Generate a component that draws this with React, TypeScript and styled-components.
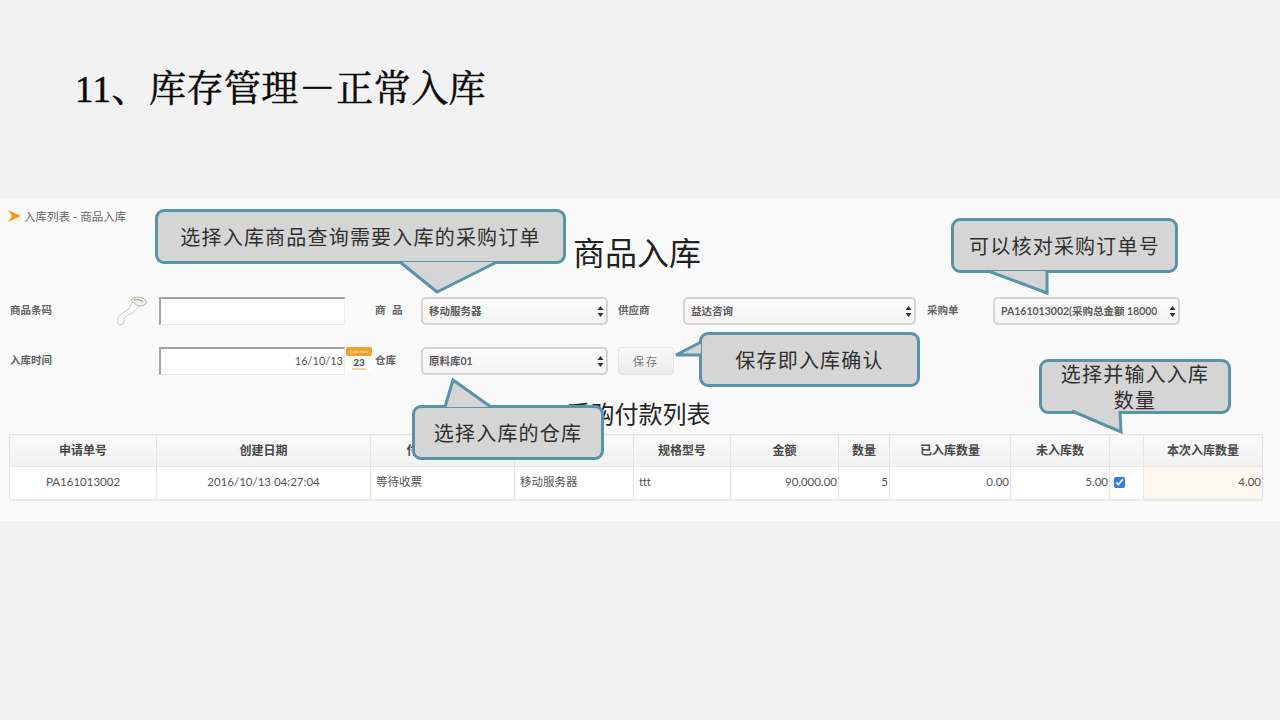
import React from 'react';
import styled, { createGlobalStyle } from 'styled-components';

const CJK = '"Noto Sans CJK SC", sans-serif';
const UI = `Lato, ${CJK}`;

const GlobalStyle = createGlobalStyle`
  html, body {
    margin: 0;
    padding: 0;
    background: #f2f2f2;
  }
`;

const Slide = styled.div`
  width: 1280px;
  height: 720px;
  overflow: hidden;
  background: #f2f2f2;
`;

const SlideHeader = styled.header`
  height: 198px;
  padding: 67px 0 0 75px;
  box-sizing: border-box;
`;

const SlideTitle = styled.h1`
  margin: 0;
  font-family: "Liberation Serif", "Noto Serif CJK SC", ${CJK};
  font-size: 37px;
  line-height: 46px;
  font-weight: 400;
  letter-spacing: 0.45px;
  -webkit-text-stroke: 0.5px #0a0a0a;
  color: #0a0a0a;
`;

const Panel = styled.section`
  position: relative;
  height: 323px;
  box-sizing: border-box;
  padding: 10px 0 0 9px;
  background: #fafafa;
  font-family: ${UI};
`;

const Breadcrumb = styled.div`
  display: flex;
  align-items: center;
  gap: 2px;
  height: 16px;
  margin-left: -1px;
  font-size: 11.5px;
  color: #666;
`;

const PageHeading = styled.h2`
  margin: 7px 0 22px;
  height: 44px;
  padding-right: 15px;
  text-align: center;
  font-size: 32px;
  line-height: 44px;
  font-weight: 400;
  color: #222;
`;

const FormGrid = styled.div`
  display: grid;
  padding-left: 1px;
  grid-template-columns: 105px 44px 186px 30px 46px 187px 10px 65px 233px 11px 66px 187px;
  grid-auto-rows: 28px;
  row-gap: 22px;
`;

const FieldLabel = styled.label<{ $col: number; $spaced?: boolean }>`
  grid-column: ${p => p.$col};
  align-self: center;
  margin-top: -4px;
  font-size: 10.5px;
  font-weight: 700;
  color: #636363;
  letter-spacing: ${p => (p.$spaced ? '2px' : '0')};
`;

const Cell = styled.div<{ $col: number }>`
  grid-column: ${p => p.$col};
  display: flex;
  align-items: center;
`;

const TextBox = styled.div<{ $col: number }>`
  grid-column: ${p => p.$col};
  box-sizing: border-box;
  display: flex;
  align-items: center;
  justify-content: flex-end;
  padding: 0 1px 2px 0;
  background: #fff;
  border-top: 2px solid #a3a3a3;
  border-left: 2px solid #a3a3a3;
  border-right: 1px solid #eee;
  border-bottom: 1px solid #e8e8e8;
  font-size: 11px;
  color: #555;
`;

const SelectBox = styled.div<{ $col: number }>`
  grid-column: ${p => p.$col};
  box-sizing: border-box;
  display: flex;
  align-items: center;
  justify-content: space-between;
  padding: 0 2px 2px 6px;
  background: linear-gradient(#fcfcfc, #f4f4f4);
  border: 2px solid #d4d4d4;
  border-radius: 5px;
  font-size: 10.5px;
  font-weight: 700;
  color: #5c5c5c;
  white-space: nowrap;
  overflow: hidden;
`;

const SelectText = styled.span`
  overflow: hidden;
`;

const SaveButton = styled.button<{ $col: number }>`
  grid-column: ${p => p.$col};
  width: 56px;
  padding: 0;
  background: linear-gradient(#fafafa, #ececec);
  border: 1px solid #e6e6e6;
  border-radius: 3px;
  font-family: ${UI};
  font-size: 11px;
  letter-spacing: 2px;
  color: #777;
`;

const CalendarIcon = styled.div`
  width: 26px;
  height: 26px;
  margin: -2px 0 0 1px;
  display: flex;
  flex-direction: column;
  align-items: center;
  background: #fdfdfd;
`;

const CalendarTop = styled.div`
  align-self: stretch;
  height: 9px;
  background: #f0a030;
  border-radius: 2px;
  font-size: 4px;
  line-height: 9px;
  text-align: center;
  color: #fde9c4;
`;

const CalendarDay = styled.div`
  font-size: 10px;
  line-height: 12px;
  font-weight: 900;
  color: #555;
`;

const CalendarFoot = styled.div`
  width: 14px;
  height: 2px;
  background: #f6d49a;
`;

const SectionHeading = styled.h3`
  margin: 22px 0 3px;
  height: 34px;
  padding-right: 12px;
  text-align: center;
  font-size: 24px;
  line-height: 34px;
  font-weight: 400;
  color: #222;
`;

const Table = styled.table`
  width: 1253px;
  table-layout: fixed;
  border-collapse: collapse;
  font-size: 10.5px;
  color: #555;
  box-shadow: 0 1px 1px #ececec;
`;

const HeadCell = styled.th`
  height: 29px;
  padding: 0 0 2px;
  border: 1px solid #e6e6e6;
  background: linear-gradient(#fafafa, #f1f1f1);
  font-size: 12px;
  font-weight: 700;
  color: #484848;
  text-align: center;
`;

const BodyCell = styled.td<{ $align: string; $tint?: boolean }>`
  height: 28px;
  padding: 0 ${p => (p.$align === 'right' ? '1px' : '0')} 4px ${p => (p.$align === 'left' ? '5px' : '0')};
  border: 1px solid #e6e6e6;
  background: ${p => (p.$tint ? '#fdf8ef' : '#fff')};
  text-align: ${p => p.$align};
  font-size: 11.5px;
  white-space: nowrap;
`;

const RowCheck = styled.input`
  display: block;
  width: 11px;
  height: 11px;
  margin: 2px 0 0 -1px;
  accent-color: #2f80e6;
`;

const Callout = styled.div<{ $x: number; $y: number; $w: number; $h: number }>`
  position: absolute;
  left: ${p => p.$x}px;
  top: ${p => p.$y}px;
  width: ${p => p.$w}px;
  height: ${p => p.$h}px;
  box-sizing: border-box;
  padding: 0 14px;
  display: flex;
  align-items: center;
  justify-content: center;
  text-align: center;
  background: #d5d5d5;
  border: 3px solid #5893aa;
  border-radius: 9px;
  font-family: ${CJK};
  font-size: 20px;
  line-height: 26px;
  letter-spacing: 1.2px;
  color: #303030;
`;

const CalloutTail = styled.svg`
  position: absolute;
  left: -3px;
  top: -3px;
  overflow: visible;
  pointer-events: none;
`;

const CalloutText = styled.span`
  position: relative;
`;

// tail points are relative to the callout's outer box: base, tip, base
const Tail: React.FC<{ points: number[][] }> = ({ points }) => {
  const line = points.map(pt => pt.join(',')).join(' ');
  return (
    <CalloutTail width="1" height="1">
      <polygon points={line} fill="#d5d5d5" />
      <polyline points={line} fill="none" stroke="#5893aa" strokeWidth="3" strokeLinejoin="miter" />
    </CalloutTail>
  );
};

const ArrowMark = () => (
  <svg width="14" height="12" viewBox="0 0 14 12">
    <path d="M0 0 L13 6 L0 12 L4 6 Z" fill="#f39a1e" />
  </svg>
);

const ScannerIcon = () => (
  <svg width="34" height="30" viewBox="0 0 34 30" fill="none" stroke="#c9cdc9" strokeWidth="1">
    <path d="M16 4 C20 0 28 0 31 5 C32 8 29 10 25 10 C22 10 20 8 16 4 Z" fill="#eef2ea" stroke="#a9b3a5" />
    <path d="M19 4 C22 3 26 4 28 6" stroke="#8f9a8c" />
    <path d="M17 6 L14 13 L5 19 C2 22 2 27 4 29" />
    <path d="M24 11 L17 17 L10 21 L8 28" />
    <path d="M4 29 L8 28" />
  </svg>
);

const SelectArrows = () => (
  <svg width="7" height="11" viewBox="0 0 7 11" style={{ flex: 'none', marginTop: 2 }}>
    <path d="M3.5 0 L6.5 4 L0.5 4 Z M3.5 11 L0.5 7 L6.5 7 Z" fill="#333" />
  </svg>
);

const columnWidths = [147, 214, 144, 119, 97, 108, 51, 121, 99, 34, 119];

const headers = ['申请单号', '创建日期', '付款单据状态', '商品名称', '规格型号', '金额', '数量', '已入库数量', '未入库数', '', '本次入库数量'];

const row = [
  { text: 'PA161013002', align: 'center' },
  { text: '2016/10/13 04:27:04', align: 'center' },
  { text: '等待收票', align: 'left' },
  { text: '移动服务器', align: 'left' },
  { text: 'ttt', align: 'left' },
  { text: '90,000.00', align: 'right' },
  { text: '5', align: 'right' },
  { text: '0.00', align: 'right' },
  { text: '5.00', align: 'right' },
];

const App: React.FC = () => {
  return (
    <Slide>
      <GlobalStyle />
      <SlideHeader>
        <SlideTitle>11、库存管理－正常入库</SlideTitle>
      </SlideHeader>

      <Panel>
        <Breadcrumb>
          <ArrowMark />
          入库列表 - 商品入库
        </Breadcrumb>
        <PageHeading>商品入库</PageHeading>

        <FormGrid>
          <FieldLabel $col={1}>商品条码</FieldLabel>
          <Cell $col={2}><ScannerIcon /></Cell>
          <TextBox $col={3} />
          <FieldLabel $col={5} $spaced>商 品</FieldLabel>
          <SelectBox $col={6}>
            <SelectText>移动服务器</SelectText>
            <SelectArrows />
          </SelectBox>
          <FieldLabel $col={8}>供应商</FieldLabel>
          <SelectBox $col={9}>
            <SelectText>益达咨询</SelectText>
            <SelectArrows />
          </SelectBox>
          <FieldLabel $col={11}>采购单</FieldLabel>
          <SelectBox $col={12}>
            <SelectText>PA161013002(采购总金额 18000</SelectText>
            <SelectArrows />
          </SelectBox>

          <FieldLabel $col={1}>入库时间</FieldLabel>
          <TextBox $col={3}>16/10/13</TextBox>
          <Cell $col={4}>
            <CalendarIcon>
              <CalendarTop>September</CalendarTop>
              <CalendarDay>23</CalendarDay>
              <CalendarFoot />
            </CalendarIcon>
          </Cell>
          <FieldLabel $col={5}>仓库</FieldLabel>
          <SelectBox $col={6}>
            <SelectText>原料库01</SelectText>
            <SelectArrows />
          </SelectBox>
          <SaveButton $col={8}>保存</SaveButton>
        </FormGrid>

        <SectionHeading>采购付款列表</SectionHeading>

        <Table>
          <colgroup>
            {columnWidths.map((w, i) => (
              <col key={i} width={w} />
            ))}
          </colgroup>
          <thead>
            <tr>
              {headers.map((h, i) => (
                <HeadCell key={i}>{h}</HeadCell>
              ))}
            </tr>
          </thead>
          <tbody>
            <tr>
              {row.map((c, i) => (
                <BodyCell key={i} $align={c.align}>{c.text}</BodyCell>
              ))}
              <BodyCell $align="left">
                <RowCheck type="checkbox" checked readOnly />
              </BodyCell>
              <BodyCell $align="right" $tint>4.00</BodyCell>
            </tr>
          </tbody>
        </Table>

        <Callout $x={155} $y={11} $w={411} $h={55}>
          <Tail points={[[245, 53], [282, 83], [342, 53]]} />
          <CalloutText>选择入库商品查询需要入库的采购订单</CalloutText>
        </Callout>
        <Callout $x={951} $y={20} $w={227} $h={55}>
          <Tail points={[[37, 53], [96, 75], [96, 53]]} />
          <CalloutText>可以核对采购订单号</CalloutText>
        </Callout>
        <Callout $x={699} $y={134} $w={221} $h={55}>
          <Tail points={[[2, 10], [-23, 23], [2, 23]]} />
          <CalloutText>保存即入库确认</CalloutText>
        </Callout>
        <Callout $x={1039} $y={161} $w={192} $h={55}>
          <Tail points={[[33, 52], [82, 73], [81, 52]]} />
          <CalloutText>选择并输入入库数量</CalloutText>
        </Callout>
        <Callout $x={412} $y={207} $w={192} $h={55}>
          <Tail points={[[33, 2], [41, -25], [79, 2]]} />
          <CalloutText>选择入库的仓库</CalloutText>
        </Callout>
      </Panel>
    </Slide>
  );
};

export default App;
